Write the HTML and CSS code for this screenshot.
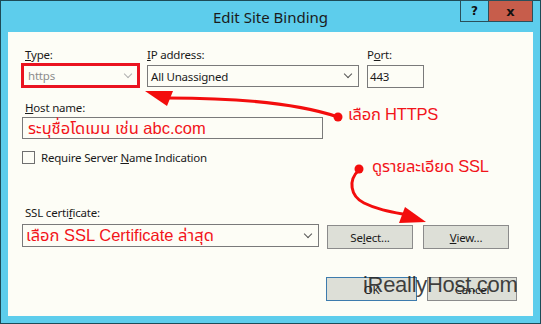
FILE: index.html
```html
<!DOCTYPE html>
<html>
<head>
<meta charset="utf-8">
<link rel="stylesheet" href="styles.css">
</head>
<body>
<div class="window">
  <div class="titlebar">
    <div class="title">Edit Site Binding</div>
    <div class="controls">
      <div class="btn-help">?</div>
      <div class="btn-close">x</div>
    </div>
  </div>
  <div class="content">
    <div class="row row-top">
      <div class="group g-type">
        <div class="label"><u>T</u>ype:</div>
        <div class="combo combo-type">
          <span class="val disabled">https</span>
          <span class="chev disabled-chev"></span>
        </div>
      </div>
      <div class="group g-ip">
        <div class="label label-ip"><u>I</u>P address:</div>
        <div class="combo combo-ip">
          <span class="val">All Unassigned</span>
          <span class="chev"></span>
        </div>
      </div>
      <div class="group g-port">
        <div class="label label-port">P<u>o</u>rt:</div>
        <div class="textbox port-box">443</div>
      </div>
    </div>

    <div class="label label-host"><u>H</u>ost name:</div>
    <div class="textbox host-box"><span class="red-text">ระบุชื่อโดเมน เช่น abc.com</span></div>

    <div class="check-row">
      <span class="checkbox"></span>
      <span class="check-label">Require Server <u>N</u>ame Indication</span>
    </div>

    <div class="label label-ssl">SSL certi<u>f</u>icate:</div>
    <div class="row row-ssl">
      <div class="combo combo-ssl">
        <span class="val red-text">เลือก SSL Certificate ล่าสุด</span>
        <span class="chev"></span>
      </div>
      <div class="button btn-select">Se<u>l</u>ect...</div>
      <div class="button btn-view"><u>V</u>iew...</div>
    </div>

    <div class="row row-bottom">
      <div class="button btn-ok">OK</div>
      <div class="button btn-cancel">Cancel</div>
    </div>
  </div>

  <svg class="annot" width="541" height="324" viewBox="0 0 541 324">
    <path d="M338,117 C300,104 240,98 168,98" fill="none" stroke="#f30d0d" stroke-width="3" stroke-linecap="round"/>
    <polygon points="145,91 173,91 167,106" fill="#f30d0d"/>
    <circle cx="338" cy="117" r="4.5" fill="#f30d0d"/>
    <path d="M359,170 C348,180 350,196 364,203 C378,210 392,212 408,215" fill="none" stroke="#f30d0d" stroke-width="3" stroke-linecap="round"/>
    <polygon points="426,222 399,223 405,207" fill="#f30d0d"/>
    <circle cx="359" cy="169" r="4.5" fill="#f30d0d"/>
  </svg>
  <div class="note note-https">เลือก HTTPS</div>
  <div class="note note-ssl">ดูรายละเอียด SSL</div>
  <div class="watermark">iReallyHost.com</div>
</div>
</body>
</html>
```

FILE: styles.css
```css
html, body {
  margin: 0;
  padding: 0;
  background: #fff;
}

.window {
  position: relative;
  width: 541px;
  height: 324px;
  box-sizing: border-box;
  border: 1px solid #1d4b57;
  background: #5dcdec;
  padding: 0 7px 7px 7px;
  display: flex;
  flex-direction: column;
  font-family: "Noto Sans", "Open Sans", sans-serif;
  font-size: 11.5px;
  letter-spacing: -0.2px;
  color: #1a1a1a;
}

.titlebar {
  position: relative;
  height: 31px;
  flex: none;
}

.title {
  position: absolute;
  left: -7px;
  right: -7px;
  top: 6px;
  text-align: center;
  font-size: 15px;
  letter-spacing: 0;
  color: #1b1b1b;
}

.controls {
  position: absolute;
  right: 0;
  top: -1px;
  display: flex;
}

.btn-help, .btn-close {
  height: 22px;
  box-sizing: border-box;
  border: 1px solid #2a4f5a;
  display: flex;
  align-items: center;
  justify-content: center;
  font-family: "DejaVu Sans", sans-serif;
  font-weight: bold;
  font-size: 12px;
  letter-spacing: 0;
  color: #111;
}

.btn-help {
  width: 28px;
  background: #5dcdec;
  border-right: none;
}

.btn-close {
  width: 45px;
  background: #c75d4b;
  font-size: 13px;
}

.content {
  flex: 1;
  background: #fdfdf6;
  padding: 15px 0 0 13px;
  position: relative;
}

.row {
  display: flex;
  align-items: flex-start;
}

.label {
  line-height: 15px;
  height: 15px;
  white-space: nowrap;
}

.g-type {
  width: 119px;
}

.g-type .label {
  padding-left: 4px;
}

.g-ip {
  margin-left: 7px;
  width: 212px;
}

.g-port {
  margin-left: 8px;
  width: 57px;
}

.combo, .textbox {
  box-sizing: border-box;
  border: 1px solid #7a7a7a;
  background: #fdfdf6;
  position: relative;
  display: flex;
  align-items: center;
  white-space: nowrap;
}

.combo-type {
  margin-top: 1px;
  height: 25px;
  border: 3px solid #ea1320;
  padding-left: 4px;
}

.val {
  padding-left: 3px;
}

.val.disabled {
  color: #8c8c8c;
  padding-left: 0;
}

.chev {
  position: absolute;
  right: 7px;
  top: 50%;
  width: 5px;
  height: 5px;
  margin-top: -5px;
  border-right: 1.5px solid #555;
  border-bottom: 1.5px solid #555;
  transform: rotate(45deg);
}

.disabled-chev {
  border-color: #b0b0b0;
  right: 6px;
}

.combo-ip {
  margin-top: 3px;
  height: 22px;
}

.port-box {
  margin-top: 3px;
  height: 23px;
  padding-left: 2px;
}

.label-host {
  margin-top: 12px;
  margin-left: 4px;
}

.host-box {
  margin-top: 2px;
  margin-left: 1px;
  width: 301px;
  height: 22px;
  padding-left: 5px;
}

.red-text {
  color: #f2141a;
  font-family: "Liberation Sans", "Noto Sans Thai", "DejaVu Sans", sans-serif;
  font-size: 16.5px;
  letter-spacing: 0;
}

.check-row {
  margin-top: 11px;
  margin-left: 1px;
  display: flex;
  align-items: center;
  height: 14px;
}

.checkbox {
  width: 13px;
  height: 13px;
  box-sizing: border-box;
  border: 1px solid #6f6f6f;
  background: #fdfdf6;
}

.check-label {
  margin-left: 6px;
}

.label-ssl {
  margin-top: 41px;
  margin-left: 4px;
}

.row-ssl {
  margin-top: 4px;
  margin-left: 1px;
}

.combo-ssl {
  width: 297px;
  height: 23px;
}

.combo-ssl .val {
  padding-left: 3px;
}

.button {
  box-sizing: border-box;
  height: 24px;
  border: 1px solid #8b8b8b;
  background: #dddfd7;
  display: flex;
  align-items: center;
  justify-content: center;
  white-space: nowrap;
}

.btn-select {
  margin-left: 8px;
  margin-top: 1px;
  width: 86px;
}

.btn-view {
  margin-left: 10px;
  margin-top: 1px;
  width: 86px;
}

.row-bottom {
  margin-top: 28px;
  margin-left: 305px;
}

.btn-ok {
  width: 91px;
  border-color: #3d7bad;
}

.btn-cancel {
  width: 90px;
  margin-left: 10px;
}

.annot {
  position: absolute;
  left: -1px;
  top: -1px;
  pointer-events: none;
}

.note {
  position: absolute;
  color: #f2141a;
  font-family: "Liberation Sans", "Noto Sans Thai", "DejaVu Sans", sans-serif;
  font-size: 16.5px;
  line-height: 18px;
  white-space: nowrap;
}

.note-https {
  left: 347px;
  top: 104px;
}

.note-ssl {
  left: 371px;
  top: 156px;
}

.watermark {
  position: absolute;
  left: 362px;
  top: 271px;
  font-family: "Liberation Sans", Arial, sans-serif;
  font-size: 22px;
  color: rgba(40, 40, 40, 0.88);
  letter-spacing: -0.3px;
  white-space: nowrap;
}
```
